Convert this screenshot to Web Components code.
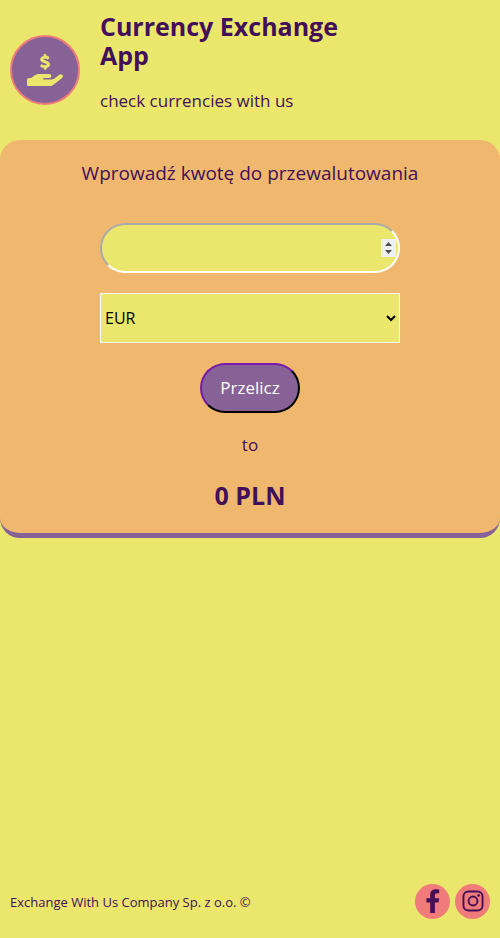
<!DOCTYPE html>
<html lang="pl">
<head>
<meta charset="utf-8">
<meta name="viewport" content="width=device-width, initial-scale=1">
<title>Currency Exchange App</title>
<style>
  :root {
    --lemon: #ebe76c;
    --violet: #866296;
    --plum: #430f58;
    --coral: #ef7b7b;
    --apricot: #f0b86e;
  }
  body {
    margin: 0;
    background: var(--lemon);
    color: var(--plum);
    font: 17px/22px "Open Sans", "Noto Sans", sans-serif;
  }
</style>
</head>
<body>
<exchange-app></exchange-app>

<script>
  const define = (name, html, setup) => {
    const template = document.createElement("template");
    template.innerHTML = html;
    customElements.define(name, class extends HTMLElement {
      constructor() {
        super();
        this.attachShadow({ mode: "open" }).append(template.content.cloneNode(true));
        if (setup) setup(this.shadowRoot);
      }
    });
  };

  define("brand-logo", `
    <style>
      :host { display: grid; place-items: center; flex: none; box-sizing: border-box; width: 70px; height: 70px;
        border: 2px solid var(--coral); border-radius: 50%; background: var(--violet); color: var(--lemon); }
      svg { display: block; width: 36px; height: 32px; fill: currentColor; }
      .coin { stroke: currentColor; stroke-width: 0.7; }
    </style>
    <svg viewBox="0 0 36 32" aria-hidden="true">
      <path class="coin" d="M17 0.6Q17 0 18 0Q19 0 19 0.6V2.1Q20.700 2.300 22 3.100L21.200 5.200Q19.400 4.300 17.900 4.300Q16.100 4.300 16.100 5.300Q16.100 6.100 18.600 6.700Q22.700 7.800 22.700 10.500Q22.700 13 19.300 13.700V14.800Q19.300 15.500 18.200 15.500Q17.200 15.500 17.200 14.800V13.800Q15 13.600 13.500 12.600L14.400 10.500Q16.300 11.500 18 11.500Q20.100 11.500 20.100 10.400Q20.100 9.500 17.400 8.800Q13.500 7.900 13.500 5.400Q13.500 2.900 17 2.200Z"/>
      <path d="M0 26Q0 24 2 24H4.200L7 21.700Q9 20 11.500 20H22.500Q24.400 20 24.400 22Q24.400 24 22.500 24H17Q16 24 16 24.700Q16 25.500 17 25.500H24.600Q26 25.500 27 24.800L32.400 20.800Q34.300 19.400 35.500 21Q36.700 22.700 35 24L26.800 30.500Q25 32 22.800 32H1Q0 32 0 31Z"/>
    </svg>
  `);

  define("app-header", `
    <style>
      :host { display: flex; align-items: center; gap: 20px; box-sizing: border-box; min-height: 140px; padding: 10px; }
      .text { display: grid; gap: 20px; flex: 0 1 250px; padding-bottom: 16px; }
      ::slotted(h1) { margin: 0; font-size: 25px; line-height: 29px; font-weight: 700; }
      ::slotted(p) { margin: 0; }
    </style>
    <brand-logo></brand-logo>
    <div class="text"><slot name="title"></slot><slot name="tagline"></slot></div>
  `);

  define("exchange-form", `
    <style>
      :host { display: block; border-bottom: 5px solid var(--violet); border-radius: 20px; background: var(--apricot); }
      form { display: flex; flex-direction: column; align-items: center; gap: 20px; padding: 20px; }
      label { font-size: 19px; line-height: 26px; margin-bottom: 17px; text-align: center; }
      input, select, button { box-sizing: border-box; height: 50px; margin: 0; font: inherit; }
      input, select { width: 300px; max-width: 100%; background: var(--lemon); color: #000; font-size: 16px; }
      input { padding: 1px 2px; border: 2px solid; border-color: #aaa #fff #fff #aaa; border-radius: 25px; }
      input::-webkit-inner-spin-button { appearance: none; align-self: center; width: 15px; height: 18px; opacity: 1;
        background: #f0f0f0 url("data:image/svg+xml,%3Csvg xmlns='http://www.w3.org/2000/svg' width='15' height='18'%3E%3Cpath fill='%23505050' d='M4 7L7.500 3L11 7ZM4 11H11L7.500 15Z'/%3E%3C/svg%3E") no-repeat center; }
      select { border: 1px solid #fff; border-radius: 0; }
      button { width: 100px; padding: 0; border: 2px solid; border-color: #7719aa #000 #000 #7719aa; border-radius: 25px;
        background: var(--violet); color: #fff; }
      p { margin: 0; padding: 1px 0; }
      output { font-size: 25px; line-height: 36px; font-weight: 700; }
    </style>
    <form>
      <label for="amount">Wprowadź kwotę do przewalutowania</label>
      <input id="amount" type="number">
      <select id="currency" aria-label="Waluta"><option>EUR</option><option>USD</option><option>CHF</option></select>
      <button type="submit">Przelicz</button>
      <p>to</p>
      <output for="amount currency">0 PLN</output>
    </form>
  `, root => root.querySelector("form").addEventListener("submit", event => event.preventDefault()));

  define("social-link", `
    <style>
      :host { display: block; }
      a { display: grid; place-items: center; box-sizing: border-box; width: 35px; height: 35px; padding-bottom: 1px;
        border-radius: 50%; background: var(--coral); color: var(--plum); }
      ::slotted(svg) { display: block; fill: currentColor; }
    </style>
    <a href="#"><slot></slot></a>
  `);

  define("app-footer", `
    <style>
      :host { display: flex; align-items: center; justify-content: space-between; gap: 10px; padding: 14px 10px 19px; }
      small { font-size: 13px; line-height: 18px; }
      nav { display: flex; gap: 5px; }
    </style>
    <small><slot></slot></small>
    <nav aria-label="Social media">
      <social-link><svg width="14" height="24" viewBox="0 0 14 24" role="img" aria-label="Facebook"><path d="M12.500 13.500L13.200 9.300H8.900V6.500C8.900 5.300 9.500 4.200 11.300 4.200H13.200V.5S11.500.2 9.800.2C6.400.2 4.200 2.300 4.200 6V9.300H.4V13.500H4.200V24H8.900V13.500Z"/></svg></social-link>
      <social-link><svg width="22" height="22" viewBox="0 0 22 22" role="img" aria-label="Instagram"><path fill-rule="evenodd" d="M6.500 0.500h9a6 6 0 0 1 6 6v9a6 6 0 0 1-6 6h-9a6 6 0 0 1-6-6v-9a6 6 0 0 1 6-6zM6.500 2.400a4.100 4.100 0 0 0-4.100 4.100v9a4.100 4.100 0 0 0 4.100 4.100h9a4.100 4.100 0 0 0 4.100-4.100v-9a4.100 4.100 0 0 0-4.100-4.100zM11 5.600a5.400 5.400 0 1 1 0 10.800a5.400 5.400 0 0 1 0-10.800zM11 7.500a3.500 3.500 0 1 0 0 7a3.500 3.500 0 0 0 0-7z"/><circle cx="16.600" cy="5.400" r="1.300"/></svg></social-link>
    </nav>
  `);

  define("exchange-app", `
    <style>
      :host { display: flex; flex-direction: column; min-height: 100vh; }
      app-footer { margin-top: auto; }
    </style>
    <app-header>
      <h1 slot="title">Currency Exchange App</h1>
      <p slot="tagline">check currencies with us</p>
    </app-header>
    <main><exchange-form></exchange-form></main>
    <app-footer>Exchange With Us Company Sp. z o.o. ©</app-footer>
  `);
</script>
</body>
</html>
